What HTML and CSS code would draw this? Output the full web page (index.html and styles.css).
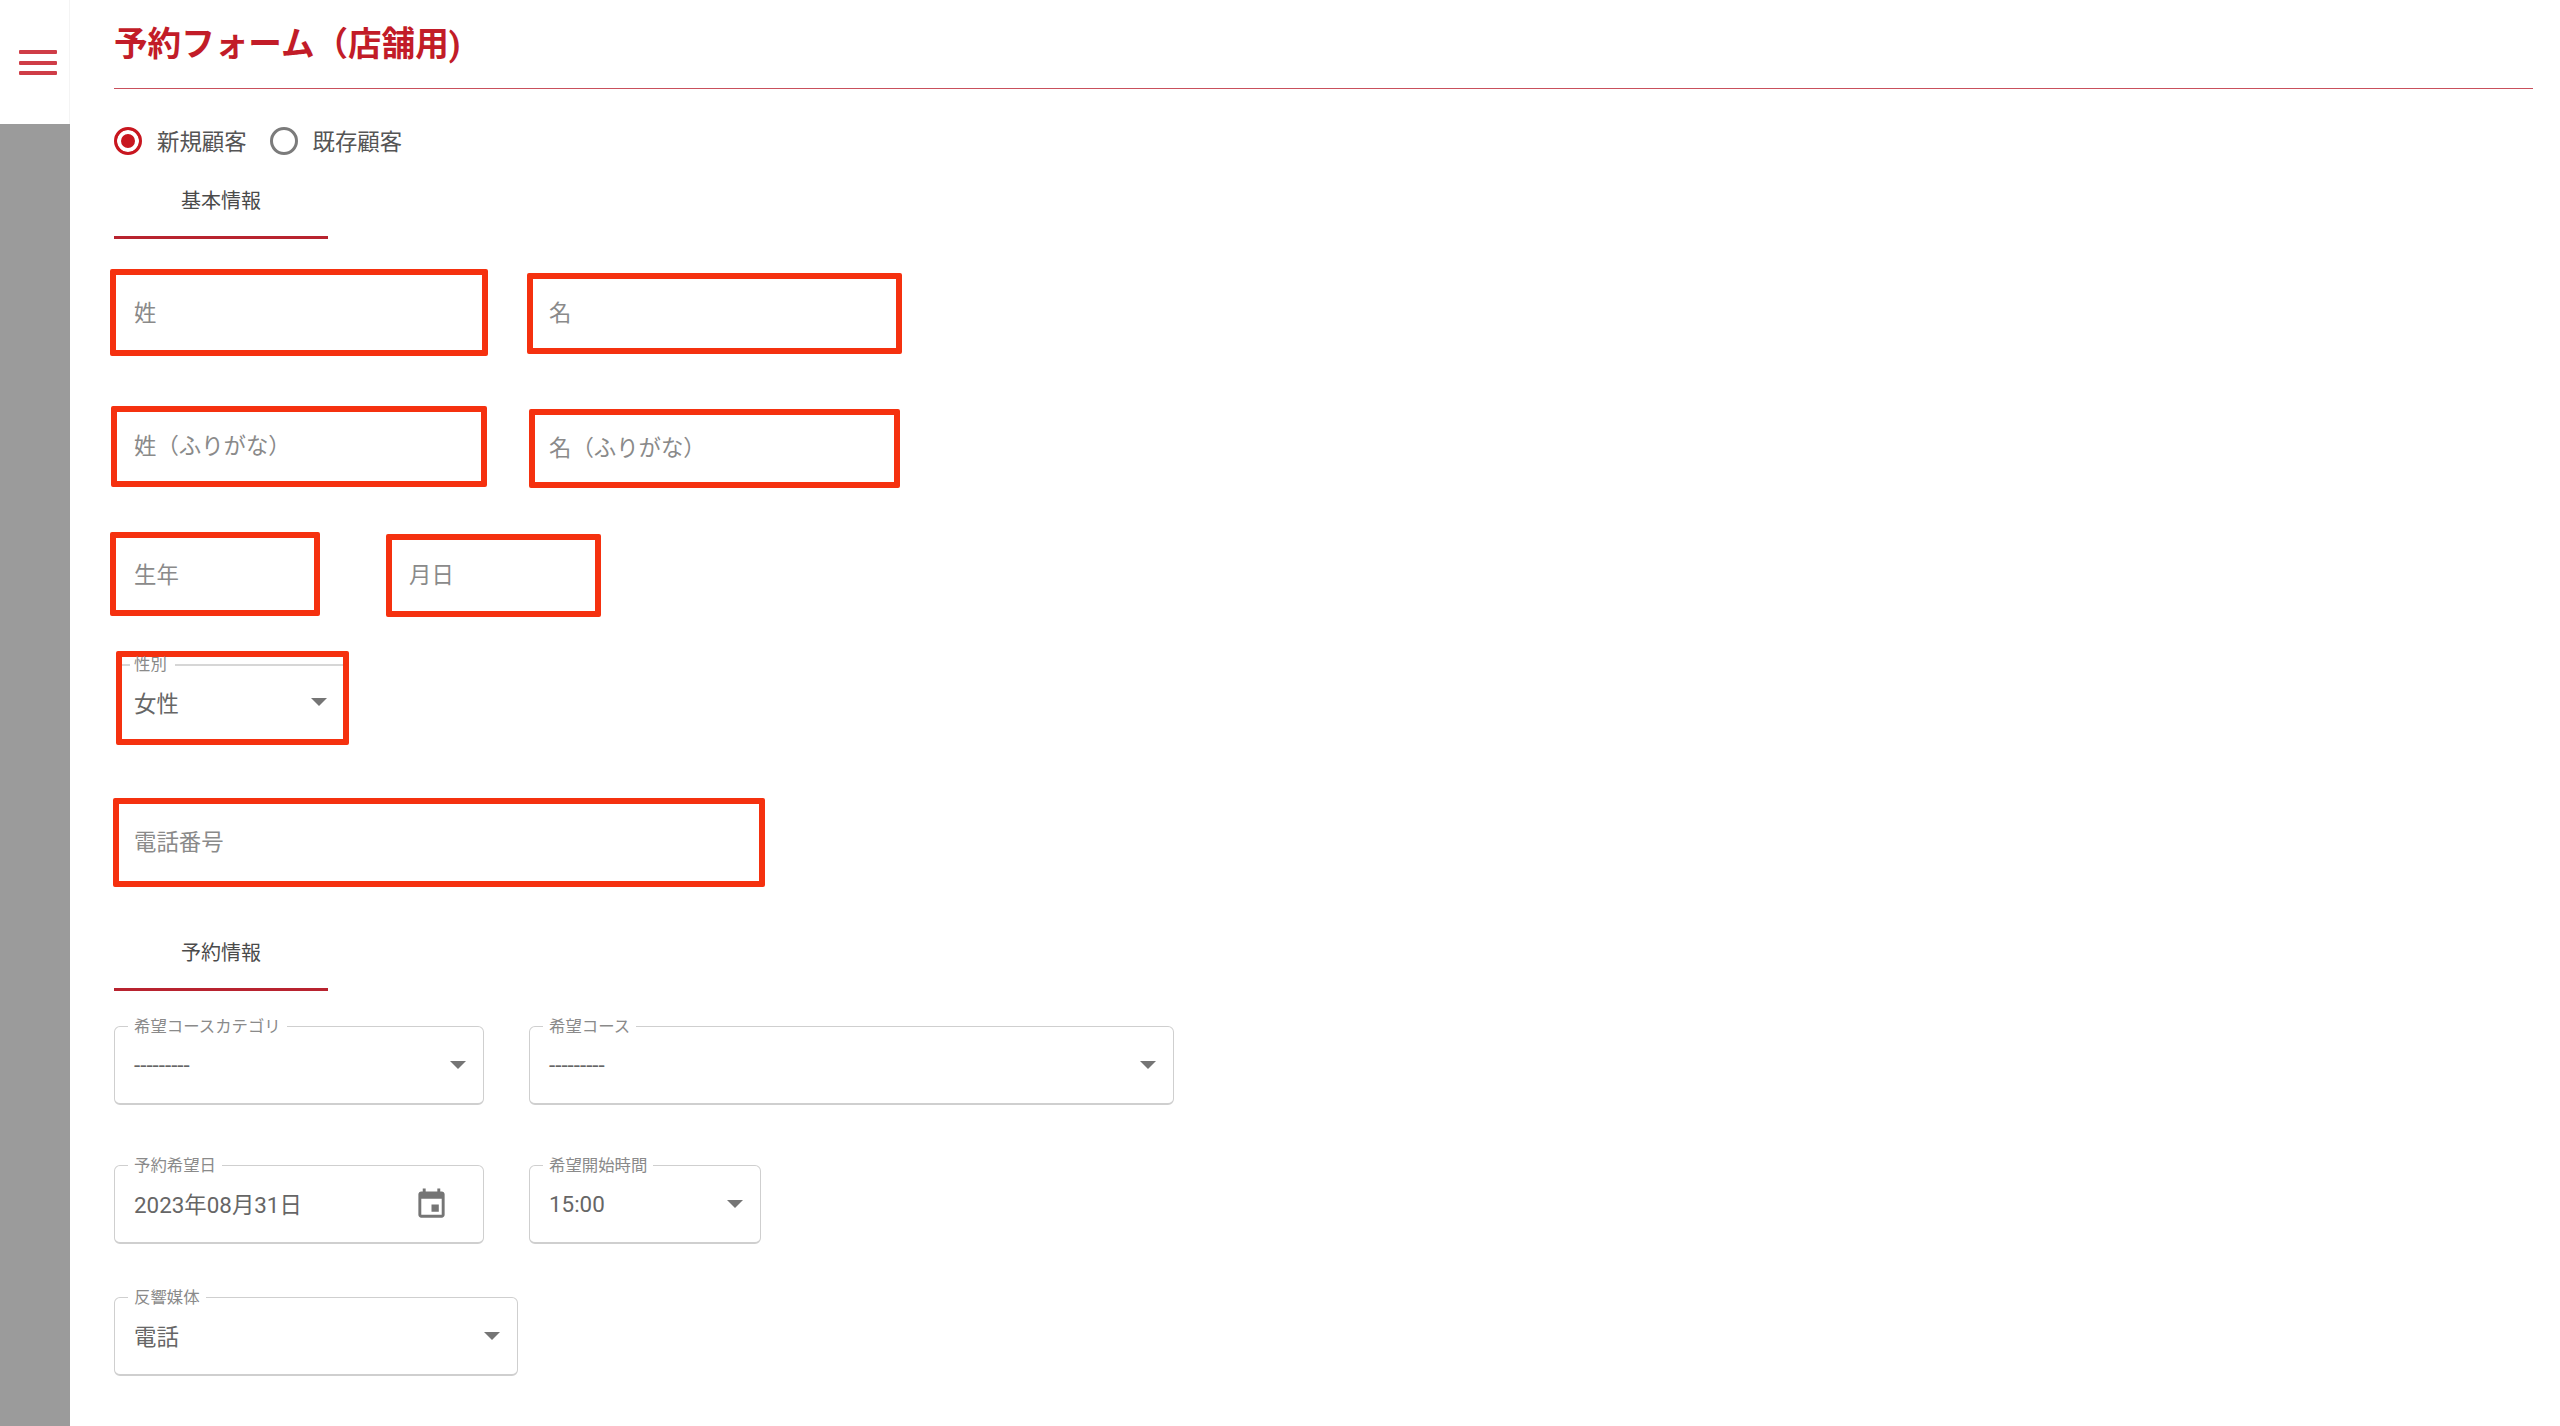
FILE: index.html
```html
<!DOCTYPE html>
<html lang="ja">
<head>
<meta charset="utf-8">
<title>予約フォーム（店舗用)</title>
<link rel="stylesheet" href="styles.css">
</head>
<body>
<div class="app">
  <aside class="sidebar">
    <div class="sidebar-top">
      <div class="hamburger"><span></span><span></span><span></span></div>
    </div>
    <div class="sidebar-fill"></div>
  </aside>
  <main class="main">
    <header class="page-head"><h1 class="page-title">予約フォーム（店舗用)</h1></header>
    <div class="radios">
      <label class="radio"><span class="radio-mark checked"></span><span>新規顧客</span></label>
      <label class="radio"><span class="radio-mark"></span><span>既存顧客</span></label>
    </div>

    <div class="tab tab-first">基本情報</div>

    <div class="row row-name">
      <div class="mark b1">姓</div>
      <div class="mark b2">名</div>
    </div>
    <div class="row row-kana">
      <div class="mark b3">姓（ふりがな）</div>
      <div class="mark b4">名（ふりがな）</div>
    </div>
    <div class="row row-birth">
      <div class="mark b5">生年</div>
      <div class="mark b6">月日</div>
    </div>
    <div class="mark gender">
      <div class="gender-legend"><i class="notch-line short"></i><span>性別</span><i class="notch-line"></i></div>
      <div class="gender-value"><span>女性</span><i class="arrow"></i></div>
    </div>
    <div class="mark phone">電話番号</div>

    <div class="tab tab-second">予約情報</div>

    <div class="row row-course">
      <div class="field w-370"><span class="legend">希望コースカテゴリ</span><span>---------</span><i class="arrow"></i></div>
      <div class="field w-645"><span class="legend">希望コース</span><span>---------</span><i class="arrow"></i></div>
    </div>
    <div class="row row-date">
      <div class="field w-370"><span class="legend">予約希望日</span><span class="value-date">2023年08月31日</span>
        <svg class="cal" viewBox="0 0 24 24"><path d="M17 12h-5v5h5v-5zM16 1v2H8V1H6v2H5c-1.11 0-1.99.9-1.99 2L3 19c0 1.1.89 2 2 2h14c1.1 0 2-.9 2-2V5c0-1.1-.9-2-2-2h-1V1h-2zm3 18H5V8h14v11z"/></svg>
      </div>
      <div class="field w-232"><span class="legend">希望開始時間</span><span>15:00</span><i class="arrow"></i></div>
    </div>
    <div class="row row-media">
      <div class="field w-404"><span class="legend">反響媒体</span><span class="value-media">電話</span><i class="arrow"></i></div>
    </div>
  </main>
</div>
</body>
</html>
```
FILE: styles.css
```css
* { box-sizing: border-box; }
html, body { margin: 0; height: 100%; background: #fff; }
body {
  font-family: Roboto, "Noto Sans CJK JP", sans-serif;
  font-size: 22.4px;
  color: #666;
  overflow: hidden;
}
.app { display: flex; height: 1426px; }

.sidebar { width: 70px; flex: none; display: flex; flex-direction: column; }
.sidebar-top {
  height: 124px;
  padding: 50px 13px 0 19px;
  border-right: 1px solid #f4f4f4;
}
.hamburger { display: flex; flex-direction: column; gap: 6.5px; width: 38px; }
.hamburger span { height: 4px; background: #cf3d47; border-radius: 1px; }
.sidebar-fill { flex: 1; background: #9b9b9b; }

.main { flex: 1; padding: 0 27px 0 44px; min-width: 0; }
.page-head { height: 89px; border-bottom: 1px solid #c9505c; }
.page-title {
  margin: 0;
  padding-top: 20px;
  font-size: 33.6px;
  line-height: 50px;
  font-weight: 700;
  color: #c21c28;
}

.radios { display: flex; margin-top: 38px; height: 28px; gap: 23px; }
.radio { display: flex; align-items: center; gap: 15px; color: #555; line-height: 28px; padding-top: 0; }
.radio span:last-child { position: relative; top: 1px; }
.radio-mark {
  width: 28px; height: 28px; flex: none;
  border: 3px solid #7b7b7b;
  border-radius: 50%;
  background: #fff;
}
.radio-mark.checked {
  border-color: #c8161f;
  background: #c8161f;
  box-shadow: inset 0 0 0 4px #fff;
}

.tab {
  width: 214px;
  height: 74px;
  padding-bottom: 3px;
  border-bottom: 3px solid #b8232f;
  display: flex; align-items: center; justify-content: center;
  font-size: 20px;
  color: #4a4a4a;
}
.tab-first { margin-top: 10px; }
.tab-second { margin-top: 30px; }

.row { display: flex; align-items: flex-start; }
.row-name { margin-top: 30px; }
.row-kana { margin-top: 50px; }
.row-birth { margin-top: 44px; }
.row-course { margin-top: 35px; }
.row-date { margin-top: 60px; }
.row-media { margin-top: 53px; }

.mark {
  border: 6px solid #f5310f;
  border-radius: 2px;
  background: #fff;
  color: #8a8a8a;
  display: flex;
  align-items: center;
  padding-left: 18px;
}
.b1 { width: 378px; height: 87px; margin-left: -4px; padding-top: 1px; }
.b2 { width: 375px; height: 81px; margin: 4px 0 0 39px; padding-left: 16px; }
.b3 { width: 376px; height: 81px; margin-left: -3px; padding-left: 17px; }
.b4 { width: 371px; height: 79px; margin: 3px 0 0 42px; padding-left: 14px; }
.b5 { width: 210px; height: 84px; margin-left: -4px; padding-top: 2px; }
.b6 { width: 215px; height: 83px; margin: 2px 0 0 66px; padding-left: 17px; }
.b1, .b2, .b3, .b4, .b5, .b6, .phone { line-height: 1; }

.gender {
  width: 233px; height: 94px;
  margin: 34px 0 0 2px;
  padding: 0;
  display: block;
  color: #666;
}
.gender-legend {
  display: flex; align-items: center; gap: 4px;
  height: 16px; margin-top: 0;
  font-size: 16.4px; line-height: 16px; color: #8a8a8a;
}
.gender-legend span { flex: none; }
.notch-line { flex: 1; height: 1.5px; background: #d6d6d6; margin-left: 4px; }
.notch-line.short { flex: none; width: 8px; margin-left: 0; }
.gender-value {
  display: flex; align-items: center; justify-content: space-between;
  height: 32px; margin-top: 13px;
  padding: 0 16px 0 12px;
}

.phone { width: 652px; height: 89px; margin: 53px 0 0 -1px; padding-left: 15px; }

.field {
  position: relative;
  height: 79px;
  border: 1.5px solid #cfcfcf;
  border-bottom-width: 2px;
  border-radius: 6px;
  padding: 0 17px 0 19px;
  display: flex; align-items: center; justify-content: space-between;
  color: #666;
}
.w-370 { width: 370px; }
.w-645 { width: 645px; margin-left: 45px; }
.w-232 { width: 232px; margin-left: 45px; }
.w-404 { width: 404px; }
.legend {
  position: absolute;
  left: 13px; top: -9px;
  padding: 0 6px;
  background: #fff;
  font-size: 16.4px;
  line-height: 18px;
  color: #8a8a8a;
  white-space: nowrap;
}
.value-date, .value-media { position: relative; top: -1px; }
.arrow {
  flex: none;
  width: 0; height: 0;
  border-left: 8px solid transparent;
  border-right: 8px solid transparent;
  border-top: 8px solid #757575;
}
.cal { width: 35px; height: 35px; fill: #757575; margin: 0 17px 0 0; flex: none; }
```
